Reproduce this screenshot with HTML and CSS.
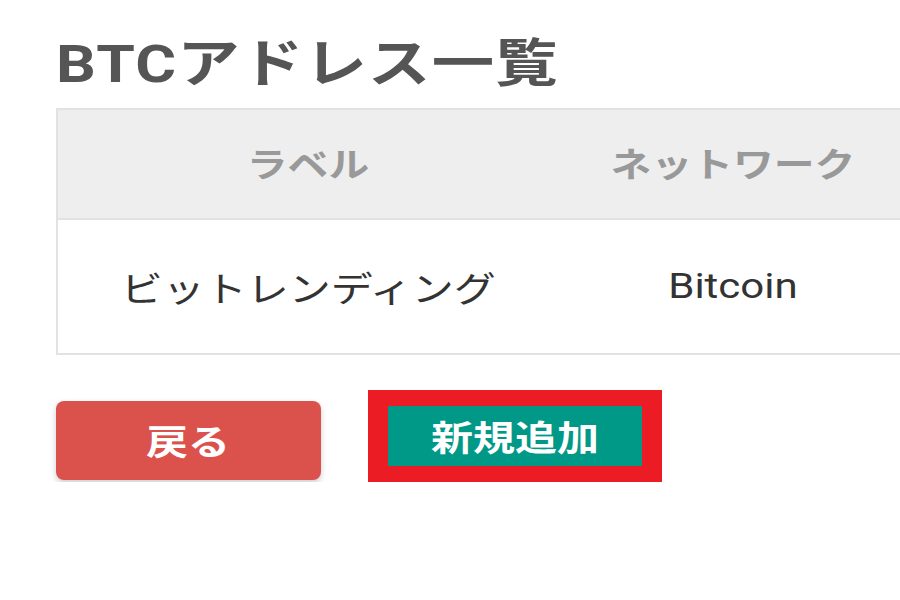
FILE: index.html
```html
<!DOCTYPE html>
<html lang="ja">
<head>
    <meta charset="UTF-8">
    <meta name="viewport" content="width=device-width, initial-scale=1.0">
    <title>BTCアドレス一覧</title>
    <link rel="stylesheet" href="styles.css">
</head>
<body>
    <div class="page">
        <h1 class="page-title"><span class="wide">BTCアドレス一覧</span></h1>

        <table class="address-table">
            <thead>
                <tr>
                    <th class="col-label"><span class="wide">ラベル</span></th>
                    <th class="col-network"><span class="wide">ネットワーク</span></th>
                    <th class="col-rest"></th>
                </tr>
            </thead>
            <tbody>
                <tr>
                    <td><span class="wide">ビットレンディング</span></td>
                    <td><span class="wide">Bitcoin</span></td>
                    <td></td>
                </tr>
            </tbody>
        </table>

        <div class="actions">
            <button class="btn btn-back"><span class="wide">戻る</span></button>
            <div class="highlight">
                <button class="btn btn-add"><span class="wide">新規追加</span></button>
            </div>
        </div>
    </div>
</body>
</html>
```

FILE: styles.css
```css
body {
    font-family: Roboto, "Noto Sans CJK JP", sans-serif;
    background-color: #fff;
    margin: 0;
    overflow: hidden;
}

.page {
    padding: 34px 0 0 56px;
}

/* the screen this was taken from renders type a little wide */
.wide {
    display: inline-block;
    transform: scaleX(1.2);
}

.page-title {
    font-size: 52px;
    line-height: 62px;
    font-weight: bold;
    color: #555;
    margin: 0 0 12px 0;
}

.page-title .wide {
    transform-origin: left center;
    letter-spacing: 1px;
}

/* Table */
.address-table {
    width: 1300px;
    border-collapse: collapse;
    table-layout: fixed;
    border: 2px solid #e2e2e2;
}

.address-table th {
    background-color: #eee;
    color: #999;
    font-size: 34px;
    font-weight: bold;
    height: 103px;
    padding-bottom: 4px;
    text-align: center;
    border-bottom: 2px solid #e2e2e2;
}

.col-label {
    width: 498px;
}

.col-network {
    width: 348px;
}

.address-table td {
    height: 130px;
    padding-bottom: 2px;
    text-align: center;
    color: #333;
    font-size: 35px;
}

/* Buttons */
.actions {
    display: flex;
    align-items: flex-start;
    gap: 47px;
    margin-top: 35px;
}

.btn {
    border: none;
    color: #fff;
    font-family: Roboto, "Noto Sans CJK JP", sans-serif;
    font-weight: bold;
    font-size: 35px;
    cursor: pointer;
}

.btn-back {
    width: 265px;
    height: 79px;
    margin-top: 11px;
    padding-bottom: 4px;
    background-color: #db524d;
    border-radius: 8px;
    box-shadow: 0 3px 6px rgba(0, 0, 0, 0.2);
}

.highlight {
    border-style: solid;
    border-color: #ec1c24;
    border-width: 16px 20px;
}

.btn-add {
    display: block;
    width: 254px;
    height: 60px;
    padding-bottom: 2px;
    background-color: #009886;
}
```
